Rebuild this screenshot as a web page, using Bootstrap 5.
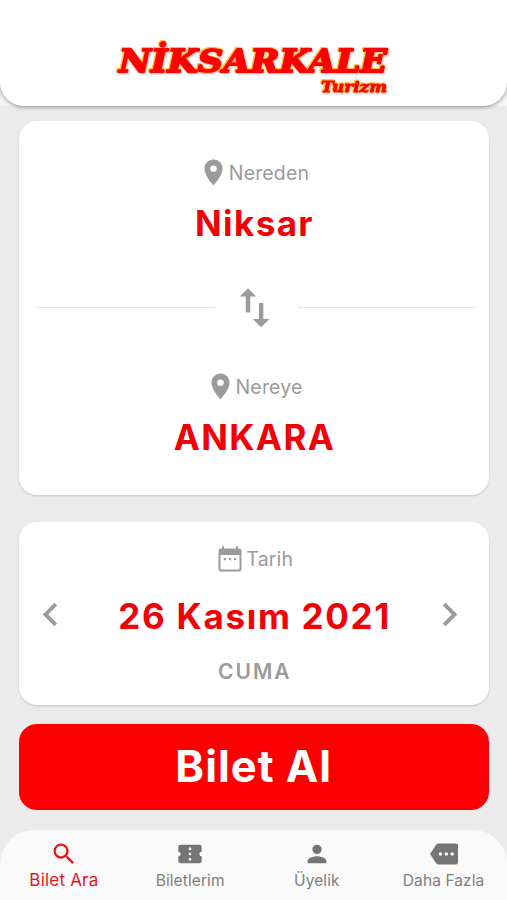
<!DOCTYPE html>
<html lang="tr">
<head>
<meta charset="utf-8">
<meta name="viewport" content="width=device-width, initial-scale=1">
<title>Niksarkale Turizm</title>
<link href="https://cdn.jsdelivr.net/npm/bootstrap@5.3.0/dist/css/bootstrap.min.css" rel="stylesheet">
<style>
  body { font-family: Inter, "Liberation Sans", sans-serif; background: #ebebeb; }
  .app { height: 900px; overflow: hidden; }
  .top-wrap { height: 106px; background: #f6f6f6; }
  .top-bar { height: 106px; background: #fff; border-radius: 0 0 24px 24px; box-shadow: 0 1px 4px rgba(0,0,0,.42); }
  .brand text { font-family: "DejaVu Serif", serif; font-weight: 700; font-style: italic; fill: #f00; stroke: #f00; stroke-linejoin: round; }
  .brand g { filter: drop-shadow(.8px .6px 0 #ffc21c) drop-shadow(-.8px -.6px 0 #ffc21c) drop-shadow(1px 1.5px 1px rgba(90,80,90,.4)); }
  .panel { margin: 0 18px 0 18.5px; background: #fff; border-radius: 18px; box-shadow: 0 1px 2px rgba(0,0,0,.17); }
  .panel-route { margin-top: 14.5px; height: 374px; padding-top: 37px; }
  .panel-date { margin-top: 27.5px; height: 182.5px; padding-top: 22px; }
  .caption { height: 30px; line-height: 30px; font-size: 19.5px; color: #9b9b9b; letter-spacing: .15px; }
  .caption .pin { margin-left: -.5px; margin-top: -1px; }
  .place { height: 44px; line-height: 44px; font-size: 35px; font-weight: 700; color: #f20005; letter-spacing: 1.4px; padding-left: 1.5px; }
  .place.day { letter-spacing: 1.7px; padding-left: 9px; }
  .swap-row { height: 44px; margin: 41px 12px 0 18px; }
  .rule { height: 1.5px; background: #e5e5e5; }
  .weekday { height: 30px; line-height: 30px; font-size: 21px; font-weight: 600; color: #9b9b9b; letter-spacing: 2px; padding-left: 2px; }
  .day-row { height: 44px; margin: 20px 15.5px 0 8.5px; }
  .day-row svg { margin-top: -4px; }
  .buy { margin: 19px 18px 0 18.5px; height: 86px; border-radius: 18px; background: #fb0000; color: #fff; font-size: 43.5px; font-weight: 700; line-height: 84px; border: 0; letter-spacing: 1px; padding: 0 0 2px; }
  .tabs { margin-top: 20px; height: 70.5px; background: #fafafa; border-radius: 34px 34px 0 0; padding-top: 10.5px; }
  .tab-item { color: #808080; font-size: 15.5px; line-height: 26px; letter-spacing: .1px; text-decoration: none; white-space: nowrap; }
  .tab-item svg { fill: #757575; }
  .tab-item.on { color: #e8161b; font-size: 17px; line-height: 25px; letter-spacing: .2px; }
  .tab-item.on span { padding-left: 1px; }
  .tab-item.on svg { fill: #e8161b; margin-left: 2px; }
  svg { display: block; flex: none; }
  .gray { fill: #9b9b9b; }
</style>
</head>
<body>
<div class="app d-flex flex-column">
  <div class="top-wrap flex-shrink-0">
    <header class="top-bar">
      <svg class="brand" width="507" height="106" role="img" aria-label="NİKSARKALE Turizm">
        <g>
          <text x="119" y="72" font-size="32.500" textLength="268" lengthAdjust="spacingAndGlyphs" stroke-width="1.900">NİKSARKALE</text>
          <text x="321" y="92" font-size="15.500" textLength="66" lengthAdjust="spacingAndGlyphs" stroke-width=".8">Turizm</text>
        </g>
      </svg>
    </header>
  </div>

  <main>
    <section class="panel panel-route">
      <div class="caption d-flex justify-content-center align-items-center">
        <svg class="gray pin" width="31" height="31" viewBox="0 0 24 24"><path d="M12 2C8.130 2 5 5.130 5 9c0 5.250 7 13 7 13s7-7.750 7-13c0-3.870-3.130-7-7-7zm0 9.500a2.500 2.500 0 1 1 0-5 2.500 2.500 0 0 1 0 5z"/></svg><span>Nereden</span>
      </div>
      <div class="place text-center" style="margin-top:13px">Niksar</div>
      <div class="swap-row d-flex align-items-center">
        <div class="rule flex-fill"></div>
        <svg class="gray" width="83" height="44" viewBox="0 0 83 44"><path d="M33 2.300l8.200 8.200h-6v16h-4.400v-16h-6.100zM43.900 17h4.400v16h6.100l-8.300 8.200-8.300-8.200h6.100z"/></svg>
        <div class="rule flex-fill"></div>
      </div>
      <div class="caption d-flex justify-content-center align-items-center" style="margin-top:42.5px">
        <svg class="gray pin" width="31" height="31" viewBox="0 0 24 24"><path d="M12 2C8.130 2 5 5.130 5 9c0 5.250 7 13 7 13s7-7.750 7-13c0-3.870-3.130-7-7-7zm0 9.500a2.500 2.500 0 1 1 0-5 2.500 2.500 0 0 1 0 5z"/></svg><span>Nereye</span>
      </div>
      <div class="place text-center" style="margin-top:12.5px">ANKARA</div>
    </section>

    <section class="panel panel-date">
      <div class="caption d-flex justify-content-center align-items-center ps-1">
        <svg class="gray me-1" width="24" height="26" viewBox="0 0 24 26"><path fill-rule="evenodd" d="M4 .2h2V2.500h12V.2h2V2.500h1A2.500 2.500 0 0 1 23.500 5v18a2.500 2.500 0 0 1-2.500 2.500H3A2.500 2.500 0 0 1 .5 23V5A2.500 2.500 0 0 1 3 2.500h1zM2.500 9v13.500a1 1 0 0 0 1 1h17a1 1 0 0 0 1-1V9zM5.800 12h2.200v2.200H5.800zm5.100 0h2.200v2.200h-2.200zm5.100 0h2.200v2.200H16z"/><path d="M2 4h20v5H2z"/></svg><span>Tarih</span>
      </div>
      <div class="day-row d-flex justify-content-between align-items-center">
        <svg class="gray" width="47" height="47" viewBox="0 0 24 24"><path d="M15.410 7.410L14 6l-6 6 6 6 1.410-1.410L10.830 12z"/></svg>
        <div class="place day">26 Kasım 2021</div>
        <svg class="gray" width="47" height="47" viewBox="0 0 24 24"><path d="M10 6L8.590 7.410 13.170 12l-4.580 4.590L10 18l6-6z"/></svg>
      </div>
      <div class="weekday text-center" style="margin-top:18.500px">CUMA</div>
    </section>

    <div class="d-grid"><button class="buy" type="button">Bilet Al</button></div>
  </main>

  <nav class="tabs d-flex flex-shrink-0">
    <a class="tab-item on col-3 d-flex flex-column align-items-center" href="#">
      <svg width="28" height="28" viewBox="0 0 24 24"><path d="M15.500 14h-.79l-.28-.27A6.471 6.471 0 0 0 16 9.500 6.500 6.500 0 1 0 9.500 16c1.610 0 3.090-.59 4.230-1.570l.27.28v.79l5 4.990L20.490 19l-4.990-5zm-6 0C7.010 14 5 11.990 5 9.500S7.010 5 9.500 5 14 7.010 14 9.500 11.990 14 9.500 14z"/></svg>
      <span>Bilet Ara</span></a>
    <a class="tab-item col-3 d-flex flex-column align-items-center" href="#">
      <svg width="28" height="28" viewBox="0 0 24 24"><path d="M22 10V6a2 2 0 0 0-2-2H4a2 2 0 0 0-1.990 2v4c1.100 0 1.990.9 1.990 2s-.89 2-2 2v4a2 2 0 0 0 2 2h16a2 2 0 0 0 2-2v-4a2 2 0 0 1 0-4zm-9 7.500h-2v-2h2v2zm0-4.500h-2v-2h2v2zm0-4.500h-2v-2h2v2z"/></svg>
      <span>Biletlerim</span></a>
    <a class="tab-item col-3 d-flex flex-column align-items-center" href="#">
      <svg width="28" height="28" viewBox="0 0 24 24"><path d="M12 12a4 4 0 1 0 0-8 4 4 0 0 0 0 8zm0 2c-2.670 0-8 1.340-8 4v2h16v-2c0-2.660-5.330-4-8-4z"/></svg>
      <span>Üyelik</span></a>
    <a class="tab-item col-3 d-flex flex-column align-items-center" href="#">
      <svg width="28" height="28" viewBox="0 0 24 24"><path d="M22 3H7c-.69 0-1.230.35-1.590.88L0 12l5.410 8.110c.36.53.9.89 1.590.89h15a2 2 0 0 0 2-2V5a2 2 0 0 0-2-2zM9 13.500a1.500 1.500 0 1 1 0-3 1.500 1.500 0 0 1 0 3zm5 0a1.500 1.500 0 1 1 0-3 1.500 1.500 0 0 1 0 3zm5 0a1.500 1.500 0 1 1 0-3 1.500 1.500 0 0 1 0 3z"/></svg>
      <span>Daha Fazla</span></a>
  </nav>
</div>
<script src="https://cdn.jsdelivr.net/npm/bootstrap@5.3.0/dist/js/bootstrap.bundle.min.js"></script>
</body>
</html>
